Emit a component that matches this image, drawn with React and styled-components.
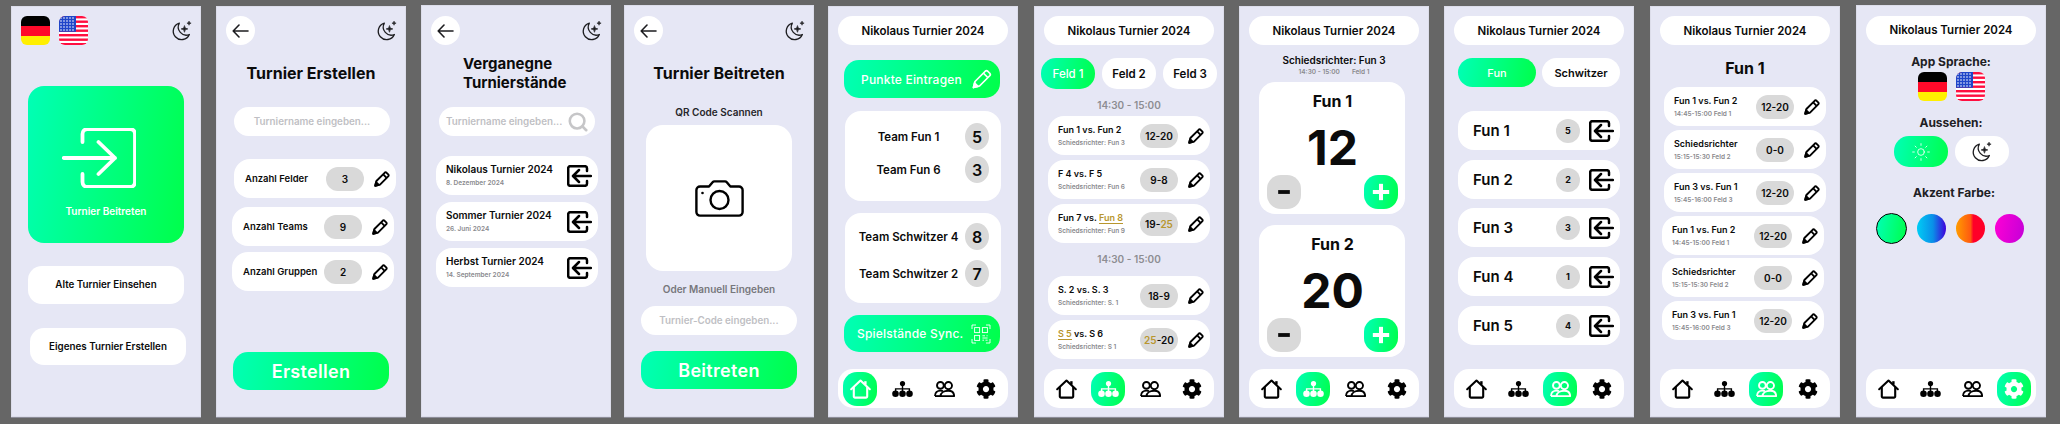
import styled, { createGlobalStyle, css } from 'styled-components'
import { FaCog } from 'react-icons/fa'
import { Minus, Plus, Search, Sun } from 'lucide-react'

const accent = 'linear-gradient(100deg, #00ffb6 0%, #00ff4a 100%)'
const gold = '#b8962e'

const GlobalStyle = createGlobalStyle`
  html, body {
    margin: 0;
    background: #666666;
  }
  * {
    box-sizing: border-box;
  }
  body {
    font-family: Inter, "Liberation Sans", sans-serif;
    color: #0b0b0b;
  }
`

// nudges a part away from where the flow would leave it
const place = css`
  margin-top: ${(p) => p.$top || 0}px;
  margin-left: ${(p) => p.$left || 0}px;
`

const Page = styled.div`
  display: flex;
  width: 2060px;
  height: 424px;
  padding: 6px 0 0 11px;
  overflow: hidden;
`

const Screen = styled.section`
  display: flex;
  flex: none;
  flex-direction: column;
  width: 190px;
  height: ${(p) => (p.$raised ? 412 : 411)}px;
  margin-top: ${(p) => (p.$raised ? -1 : 0)}px;
  margin-left: ${(p) => p.$gap || 0}px;
  padding-top: ${(p) => (p.$raised ? 1 : 0)}px;
  padding-bottom: 9px;
  background: #e6e7f5;
  box-shadow: inset 0 0 0 1px #dcddea, 0 1px 0 #8d8d99;
`

const TopBar = styled.div`
  display: flex;
  flex: none;
  align-items: center;
  justify-content: space-between;
  height: 29px;
  margin-top: 10px;
  padding: 0 9px 0 10px;
`

const Flags = styled.div`
  display: flex;
  justify-content: ${(p) => (p.$center ? 'center' : 'flex-start')};
  gap: 9px;
  ${place}
`

const FlagFrame = styled.div`
  width: 29px;
  height: 29px;
  border-radius: 6px;
  overflow: hidden;
  svg {
    display: block;
  }
`

const BackButton = styled.div`
  display: flex;
  align-items: center;
  justify-content: center;
  width: 29px;
  height: 29px;
  border-radius: 50%;
  background: #ffffff;
`

const BigCard = styled.div`
  display: flex;
  flex: none;
  flex-direction: column;
  align-items: center;
  width: 156px;
  height: 157px;
  padding-top: 42px;
  border-radius: 16px;
  background: ${accent};
  color: #ffffff;
  ${place}
`

const BigIcon = styled.div`
  height: 60px;
  margin-right: 14px;
`

const BigLabel = styled.div`
  margin-top: 17px;
  font-size: 10px;
  font-weight: 600;
  line-height: 12px;
`

const WhiteButton = styled.div`
  display: flex;
  flex: none;
  align-items: center;
  justify-content: center;
  width: 156px;
  height: 37.5px;
  border-radius: 14px;
  background: #ffffff;
  font-size: 9.8px;
  font-weight: 600;
  ${place}
`

const Title = styled.h1`
  flex: none;
  margin: ${(p) => p.$top || 18}px 0 0;
  font-size: 16px;
  font-weight: 700;
  line-height: 20px;
  text-align: center;
`

const TwoLineTitle = styled.h1`
  flex: none;
  margin: 8.5px 0 0 42px;
  font-size: 15px;
  font-weight: 700;
  line-height: 19px;
`

const Field = styled.div`
  display: flex;
  flex: none;
  align-items: center;
  justify-content: ${(p) => (p.$search ? 'space-between' : 'center')};
  width: 156px;
  height: 29px;
  padding: ${(p) => (p.$search ? '0 6px 0 7px' : '0')};
  border-radius: 15px;
  background: #ffffff;
  color: #bfbfc4;
  font-size: 9.8px;
  font-weight: 600;
  ${place}
`

const Row = styled.div`
  display: flex;
  flex: none;
  align-items: center;
  width: 162px;
  height: 39px;
  padding: 0 6px 0 ${(p) => p.$pad || 10}px;
  border-radius: 16px;
  background: #ffffff;
  ${place}
  svg {
    flex: none;
  }
`

const RowLabel = styled.div`
  flex: 1;
  font-size: ${(p) => p.$size || 9.5}px;
  font-weight: 600;
  white-space: nowrap;
`

const RowText = styled.div`
  flex: 1;
  min-width: 0;
  white-space: nowrap;
`

const RowTitle = styled.div`
  font-size: ${(p) => p.$size || 9}px;
  font-weight: 600;
  line-height: 13px;
`

const RowSub = styled.div`
  margin-top: 2px;
  color: #8a8a8e;
  font-size: 6.5px;
  font-weight: 600;
  line-height: 10px;
`

const Scoreline = styled.div`
  display: flex;
  flex: none;
  align-items: center;
  justify-content: center;
  width: 38px;
  height: 24px;
  margin-right: 10px;
  border-radius: 12px;
  background: #d9d9d9;
  font-size: 10px;
  font-weight: 600;
`

const Winner = styled.span`
  color: ${gold};
`

const WinnerName = styled.span`
  border-bottom: 1px solid ${gold};
  color: ${gold};
`

const ActionButton = styled.div`
  display: flex;
  flex: none;
  align-items: center;
  justify-content: space-between;
  width: 156px;
  height: ${(p) => p.$height || 38}px;
  padding: ${(p) => p.$padding};
  border-radius: 15px;
  background: ${accent};
  color: #ffffff;
  font-size: 12px;
  font-weight: 500;
  letter-spacing: 0.2px;
  svg {
    flex: none;
  }
  ${place}
`

const SubmitButton = styled.div`
  display: flex;
  flex: none;
  align-items: center;
  justify-content: center;
  width: 156px;
  height: 38px;
  border-radius: 15px;
  background: ${accent};
  color: #ffffff;
  font-size: 18px;
  font-weight: 600;
  letter-spacing: 0.3px;
  ${place}
`

const CaptionText = styled.div`
  flex: none;
  color: ${(p) => p.$color || '#26262a'};
  font-size: 10px;
  font-weight: 600;
  line-height: 12px;
  text-align: center;
  ${place}
`

const CameraCard = styled.div`
  display: flex;
  flex: none;
  align-items: center;
  justify-content: center;
  width: 146px;
  height: 146px;
  border-radius: 17px;
  background: #ffffff;
  ${place}
`

const Header = styled.div`
  display: flex;
  flex: none;
  align-items: center;
  justify-content: center;
  width: 170px;
  height: 29px;
  margin: ${(p) => (p.$top === undefined ? 10 : p.$top)}px 0 0 10px;
  border-radius: 15px;
  background: #ffffff;
  font-size: 11.5px;
  font-weight: 600;
`

const TeamCard = styled.div`
  display: flex;
  flex: none;
  flex-direction: column;
  gap: ${(p) => p.$gap}px;
  width: 156px;
  height: 90px;
  padding: ${(p) => p.$pad}px 12px 0 13px;
  border-radius: 16px;
  background: #ffffff;
  ${place}
`

const TeamRow = styled.div`
  display: flex;
  align-items: center;
`

const TeamName = styled.div`
  flex: 1;
  padding-right: 6px;
  font-size: 11.5px;
  font-weight: 600;
  text-align: center;
  white-space: nowrap;
`

const TeamPoints = styled.div`
  display: flex;
  flex: none;
  align-items: center;
  justify-content: center;
  width: 24px;
  height: 27px;
  border-radius: 50%;
  background: #d9d9d9;
  font-size: 16px;
  font-weight: 600;
`

const Nav = styled.nav`
  display: grid;
  flex: none;
  grid-template-columns: repeat(4, 42px);
  align-items: center;
  justify-items: center;
  width: 170px;
  height: 39px;
  margin: auto 0 0 10px;
  padding-left: 1px;
  border-radius: 15px;
  background: #ffffff;
`

const NavItem = styled.div`
  display: flex;
  align-items: center;
  justify-content: center;
  width: 34px;
  height: 34px;
  border-radius: 14px;
  background: ${(p) => (p.$active ? accent : 'transparent')};
  color: ${(p) => (p.$active ? '#ffffff' : '#000000')};
`

const Tabs = styled.div`
  display: flex;
  flex: none;
  gap: ${(p) => p.$gap}px;
  margin: 13px 0 0 ${(p) => p.$left}px;
`

const Tab = styled.div`
  display: flex;
  align-items: center;
  justify-content: center;
  width: ${(p) => p.$width}px;
  height: ${(p) => p.$height}px;
  border-radius: 15px;
  background: ${(p) => (p.$active ? accent : '#ffffff')};
  color: ${(p) => (p.$active ? '#ffffff' : '#0b0b0b')};
  font-size: ${(p) => p.$size}px;
  font-weight: ${(p) => (p.$active ? 500 : 600)};
`

const TimeSlot = styled.div`
  flex: none;
  margin-top: 9.5px;
  color: #8d8d92;
  font-size: 10px;
  font-weight: 600;
  line-height: 13px;
  text-align: center;
`

const RefereeMeta = styled.div`
  display: flex;
  flex: none;
  justify-content: center;
  gap: 12px;
  margin-top: 1.5px;
  color: #8a8a8e;
  font-size: 6.5px;
  font-weight: 600;
  line-height: 10px;
`

const ScoreCard = styled.div`
  display: flex;
  flex: none;
  flex-direction: column;
  align-items: center;
  width: 146px;
  height: 132px;
  padding: 9px 7px 0 8px;
  border-radius: 16px;
  background: #ffffff;
  ${place}
`

const ScoreTeam = styled.div`
  font-size: 16px;
  font-weight: 700;
  line-height: 20px;
`

const ScoreValue = styled.div`
  margin-top: 13px;
  font-size: 48px;
  font-weight: 700;
  line-height: 48px;
`

const ScoreControls = styled.div`
  display: flex;
  justify-content: space-between;
  width: 100%;
  margin-top: 3px;
`

const ScoreButton = styled.div`
  display: flex;
  align-items: center;
  justify-content: center;
  width: 34px;
  height: 34px;
  border-radius: 14px;
  background: ${(p) => (p.$plus ? accent : '#d9d9d9')};
  color: ${(p) => (p.$plus ? '#ffffff' : '#0b0b0b')};
`

const RankBadge = styled.div`
  display: flex;
  flex: none;
  align-items: center;
  justify-content: center;
  width: 24px;
  height: 24px;
  margin-right: 9px;
  border-radius: 50%;
  background: #d9d9d9;
  font-size: 9px;
  font-weight: 700;
`

const SectionTitle = styled.div`
  flex: none;
  padding-left: ${(p) => p.$shift || 0}px;
  color: #202024;
  font-size: 12px;
  font-weight: 700;
  line-height: 14px;
  text-align: center;
  ${place}
`

const ThemeToggles = styled.div`
  display: flex;
  flex: none;
  justify-content: center;
  gap: 7px;
  margin-top: 6px;
`

const ThemeToggle = styled.div`
  display: flex;
  align-items: center;
  justify-content: center;
  width: 54px;
  height: 31px;
  border-radius: 15px;
  background: ${(p) => (p.$active ? accent : '#ffffff')};
  color: ${(p) => (p.$active ? '#ffffff' : '#000000')};
`

const Swatches = styled.div`
  display: flex;
  flex: none;
  align-items: center;
  gap: 10px;
  margin: 13px 0 0 20px;
`

const Swatch = styled.div`
  width: ${(p) => (p.$selected ? 31 : 29)}px;
  height: ${(p) => (p.$selected ? 31 : 29)}px;
  border: ${(p) => (p.$selected ? '1.5px solid #000000' : 'none')};
  border-radius: 50%;
  background: ${(p) => p.$fill};
`

const star = (x, y, r) =>
  `M${x} ${y - r}Q${x} ${y} ${x + r} ${y}Q${x} ${y} ${x} ${y + r}Q${x} ${y} ${x - r} ${y}Q${x} ${y} ${x} ${y - r}Z`

function MoonIcon({ size = 21 }) {
  return (
    <svg width={size} height={size} viewBox="0 0 24 24" fill="none">
      <path
        d="M9.5 3.6A9.6 9.6 0 1 0 21 16.6A9.2 9.2 0 0 1 9.5 3.6Z"
        stroke="#1c1c1f"
        strokeWidth="1.5"
        strokeLinejoin="round"
      />
      <path d={star(15.4, 10.2, 3.8)} fill="#1c1c1f" stroke="#1c1c1f" strokeWidth="0.8" />
      <path d={star(20.6, 3.6, 2.4)} fill="#1c1c1f" stroke="#1c1c1f" strokeWidth="0.6" />
    </svg>
  )
}

function BackIcon() {
  return (
    <svg width="17" height="14" viewBox="0 0 17 14" fill="none" stroke="#1c1c1f" strokeWidth="1.6" strokeLinecap="round" strokeLinejoin="round">
      <path d="M16 7H1.2M7 1L1.2 7L7 13" />
    </svg>
  )
}

function GermanFlag() {
  return (
    <FlagFrame>
      <svg width="29" height="29" viewBox="0 0 29 29">
        <rect width="29" height="10" fill="#000000" />
        <rect y="10" width="29" height="10" fill="#ff0a2a" />
        <rect y="20" width="29" height="9" fill="#ffef00" />
      </svg>
    </FlagFrame>
  )
}

function UsaFlag() {
  const stripes = [0, 4.5, 9, 13.5, 18, 22.5, 27]
  const dots = []
  for (let y = 2; y < 15; y += 3) {
    for (let x = 2; x < 17; x += 3) dots.push([x, y])
  }
  return (
    <FlagFrame>
      <svg width="29" height="29" viewBox="0 0 29 29">
        <rect width="29" height="29" fill="#ffffff" />
        {stripes.map((y) => (
          <rect key={y} y={y} width="29" height="2.4" fill="#ff0f40" />
        ))}
        <rect width="17" height="15.8" fill="#1f45c9" />
        {dots.map(([x, y]) => (
          <circle key={`${x}-${y}`} cx={x} cy={y} r="0.8" fill="#ffffff" />
        ))}
      </svg>
    </FlagFrame>
  )
}

function JoinIcon() {
  return (
    <svg width="74" height="60" viewBox="0 0 74 60" fill="none" stroke="#ffffff" strokeWidth="3.8" strokeLinecap="round" strokeLinejoin="round">
      <path d="M20.5 14V6a5 5 0 0 1 5-5H68a5 5 0 0 1 5 5v48a5 5 0 0 1-5 5H25.5a5 5 0 0 1-5-5v-8" />
      <path d="M1.8 30H53M36.5 14L53 30L36.5 46" />
    </svg>
  )
}

function ExitIcon() {
  return (
    <svg width="25" height="22" viewBox="0 0 25 22" fill="none" stroke="#000000" strokeWidth="2.5" strokeLinecap="round" strokeLinejoin="round">
      <path d="M20 6V3.2a2 2 0 0 0-2-2H3.2a2 2 0 0 0-2 2v15.6a2 2 0 0 0 2 2H18a2 2 0 0 0 2-2V16" />
      <path d="M24 11H6.5M12 5l-6 6 6 6" />
    </svg>
  )
}

function PencilIcon({ size = 16, color = '#000000', outline = 1.9 }) {
  return (
    <svg width={size} height={size} viewBox="0 0 16 16" fill="none" stroke={color} strokeWidth={outline} strokeLinejoin="round">
      <path d="M1.2 14.8L2.4 10L10.6 1.8Q11.6 .9 12.6 1.8L14.2 3.4Q15.1 4.4 14.2 5.4L6 13.6Z" />
      <path d="M9.2 3.4L12.6 6.8" />
      <path d="M1.2 14.8L2.1 11.2L4.8 13.9Z" fill={color} />
    </svg>
  )
}

function CameraIcon() {
  return (
    <svg width="49" height="37" viewBox="0 0 49 37" fill="none" stroke="#000000" strokeWidth="2.4" strokeLinejoin="round">
      <path d="M14 6.5L17.6 2.2A2.4 2.4 0 0 1 19.4 1.4H30A2.4 2.4 0 0 1 31.8 2.2L35.4 6.5H44A3.6 3.6 0 0 1 47.6 10.1V32A3.6 3.6 0 0 1 44 35.6H5A3.6 3.6 0 0 1 1.4 32V10.1A3.6 3.6 0 0 1 5 6.5Z" />
      <circle cx="24.5" cy="20" r="9" />
      <circle cx="7.5" cy="13" r="1.3" fill="#000000" stroke="none" />
    </svg>
  )
}

function QrIcon() {
  return (
    <svg width="20" height="20" viewBox="0 0 20 20" fill="none" stroke="#ffffff" strokeWidth="0.9">
      <path d="M1 5V1H5M15 1H19V5M19 15V19H15M5 19H1V15" />
      <rect x="3.6" y="3.6" width="5" height="5" />
      <rect x="11.4" y="3.6" width="5" height="5" />
      <rect x="3.6" y="11.4" width="5" height="5" />
      <path d="M11.4 11.8H14M15.5 11.8H16.6M11.4 14H16.6M11.4 16.2H13M14.5 16.2H16.6" />
    </svg>
  )
}

function HomeIcon() {
  return (
    <svg width="21" height="20" viewBox="0 0 21 20" fill="none" stroke="currentColor" strokeWidth="2.1" strokeLinecap="round" strokeLinejoin="round">
      <path d="M1.2 10.2L10.5 1.5L19.8 10.2" />
      <path d="M3.8 8.5V17.4a1.2 1.2 0 0 0 1.2 1.2H16a1.2 1.2 0 0 0 1.2-1.2V8.5" />
      <path d="M15.4 2.2V5.6" strokeWidth="2.4" strokeLinecap="butt" />
    </svg>
  )
}

function TreeIcon() {
  return (
    <svg width="21" height="16" viewBox="0 0 21 16" fill="currentColor">
      <circle cx="10.5" cy="2.6" r="2.6" />
      <path d="M9.8 4h1.4v3.2h6.9v2.8h-1.4V8.6h-5.5V10H9.8V8.6H4.3V10H2.9V7.2h6.9z" />
      <circle cx="3.5" cy="12.7" r="3.3" />
      <circle cx="10.5" cy="12.7" r="3.3" />
      <circle cx="17.5" cy="12.7" r="3.3" />
    </svg>
  )
}

function PeopleIcon() {
  return (
    <svg width="21" height="16" viewBox="0 0 21 16" fill="none" stroke="currentColor" strokeWidth="1.9" strokeLinejoin="round">
      <circle cx="6.4" cy="4.4" r="3.4" />
      <circle cx="14.4" cy="4.6" r="3.6" />
      <path d="M1 15.1C1 11.6 3.4 9.6 6.4 9.6C7.4 9.6 8.2 9.8 9 10.2" />
      <path d="M6.6 15.1C6.6 11.8 10 9.8 14.2 9.8C17.8 9.8 20.1 11.8 20.1 15.1Z" />
      <path d="M1 15.1H7" />
    </svg>
  )
}

const NAV_ICONS = [
  <HomeIcon key="home" />,
  <TreeIcon key="tree" />,
  <PeopleIcon key="people" />,
  <FaCog key="gear" size={20} />,
]

function BottomNav({ active }) {
  return (
    <Nav>
      {NAV_ICONS.map((icon, i) => (
        <NavItem key={i} $active={i === active}>
          {icon}
        </NavItem>
      ))}
    </Nav>
  )
}

const TOURNAMENT = 'Nikolaus Turnier 2024'

const settingsRows = [
  { label: 'Anzahl Felder', value: 3, left: 18, top: 23, pad: 11 },
  { label: 'Anzahl Teams', value: 9, left: 16, top: 9, pad: 11 },
  { label: 'Anzahl Gruppen', value: 2, left: 16, top: 6, pad: 11 },
]

const pastTournaments = [
  { name: 'Nikolaus Turnier 2024', date: '8. Dezember 2024', top: 20 },
  { name: 'Sommer Turnier 2024', date: '26. Juni 2024', top: 7 },
  { name: 'Herbst Turnier 2024', date: '14. September 2024', top: 7 },
]

const firstSlot = [
  { title: 'Fun 1 vs. Fun 2', sub: 'Schiedsrichter: Fun 3', score: '12-20', top: 4.5 },
  { title: 'F 4 vs. F 5', sub: 'Schiedsrichter: Fun 6', score: '9-8', top: 5 },
  {
    title: (
      <>
        Fun 7 vs. <WinnerName>Fun 8</WinnerName>
      </>
    ),
    sub: 'Schiedsrichter: Fun 9',
    score: (
      <>
        19-<Winner>25</Winner>
      </>
    ),
    top: 5,
  },
]

const secondSlot = [
  { title: 'S. 2 vs. S. 3', sub: 'Schiedsrichter: S. 1', score: '18-9', top: 10.5 },
  {
    title: (
      <>
        <WinnerName>S 5</WinnerName> vs. S 6
      </>
    ),
    sub: 'Schiedsrichter: S 1',
    score: (
      <>
        <Winner>25</Winner>-20
      </>
    ),
    top: 5,
  },
]

const standings = [
  { name: 'Fun 1', rank: 5, top: 24 },
  { name: 'Fun 2', rank: 2, top: 10 },
  { name: 'Fun 3', rank: 3, top: 9 },
  { name: 'Fun 4', rank: 1, top: 10 },
  { name: 'Fun 5', rank: 4, top: 10 },
]

const teamGames = [
  { title: 'Fun 1 vs. Fun 2', sub: '14:45-15:00 Feld 1', score: '12-20', top: 9, left: 14 },
  { title: 'Schiedsrichter', sub: '15:15-15:30 Feld 2', score: '0-0', top: 4, left: 14 },
  { title: 'Fun 3 vs. Fun 1', sub: '15:45-16:00 Feld 3', score: '12-20', top: 4, left: 14 },
  { title: 'Fun 1 vs. Fun 2', sub: '14:45-15:00 Feld 1', score: '12-20', top: 4, left: 12 },
  { title: 'Schiedsrichter', sub: '15:15-15:30 Feld 2', score: '0-0', top: 3, left: 12 },
  { title: 'Fun 3 vs. Fun 1', sub: '15:45-16:00 Feld 3', score: '12-20', top: 4, left: 12 },
]

const accentColours = [
  { fill: 'linear-gradient(100deg, #00ffb6, #00ff4a)', selected: true },
  { fill: 'linear-gradient(90deg, #00cdf5 0%, #0a8fe8 55%, #3f00dc 100%)' },
  { fill: 'linear-gradient(90deg, #ff9d00 0%, #ff5a10 50%, #ff0028 60%, #ff0028 100%)' },
  { fill: 'linear-gradient(100deg, #ff00d4, #c400d8)' },
]

function GameRow({ game }) {
  return (
    <Row $top={game.top} $left={game.left === undefined ? 14 : game.left}>
      <RowText>
        <RowTitle>{game.title}</RowTitle>
        <RowSub>{game.sub}</RowSub>
      </RowText>
      <Scoreline>{game.score}</Scoreline>
      <PencilIcon />
    </Row>
  )
}

function ScorePanel({ team, score, top }) {
  return (
    <ScoreCard $top={top} $left={20}>
      <ScoreTeam>{team}</ScoreTeam>
      <ScoreValue>{score}</ScoreValue>
      <ScoreControls>
        <ScoreButton>
          <Minus size={20} strokeWidth={4.6} strokeLinecap="butt" />
        </ScoreButton>
        <ScoreButton $plus>
          <Plus size={28} strokeWidth={3.4} strokeLinecap="butt" />
        </ScoreButton>
      </ScoreControls>
    </ScoreCard>
  )
}

function App() {
  return (
    <Page>
      <GlobalStyle />

      <Screen>
        <TopBar>
          <Flags>
            <GermanFlag />
            <UsaFlag />
          </Flags>
          <MoonIcon />
        </TopBar>
        <BigCard $top={41} $left={17}>
          <BigIcon>
            <JoinIcon />
          </BigIcon>
          <BigLabel>Turnier Beitreten</BigLabel>
        </BigCard>
        <WhiteButton $top={23} $left={17}>Alte Turnier Einsehen</WhiteButton>
        <WhiteButton $top={24} $left={19}>Eigenes Turnier Erstellen</WhiteButton>
      </Screen>

      <Screen $gap={15}>
        <TopBar>
          <BackButton>
            <BackIcon />
          </BackButton>
          <MoonIcon />
        </TopBar>
        <Title>Turnier Erstellen</Title>
        <Field $top={24} $left={18}>Turniername eingeben...</Field>
        {settingsRows.map((row) => (
          <Row key={row.label} $top={row.top} $left={row.left} $pad={row.pad}>
            <RowLabel>{row.label}</RowLabel>
            <Scoreline>{row.value}</Scoreline>
            <PencilIcon />
          </Row>
        ))}
        <SubmitButton $top={61} $left={17}>Erstellen</SubmitButton>
      </Screen>

      <Screen $gap={15} $raised>
        <TopBar>
          <BackButton>
            <BackIcon />
          </BackButton>
          <MoonIcon />
        </TopBar>
        <TwoLineTitle>
          Verganegne
          <br />
          Turnierstände
        </TwoLineTitle>
        <Field $top={15.5} $left={18} $search>
          Turniername eingeben...
          <Search size={22} color="#c6c6c8" strokeWidth={2.8} />
        </Field>
        {pastTournaments.map((item) => (
          <Row key={item.name} $top={item.top} $left={15}>
            <RowText>
              <RowTitle $size={10}>{item.name}</RowTitle>
              <RowSub>{item.date}</RowSub>
            </RowText>
            <ExitIcon />
          </Row>
        ))}
      </Screen>

      <Screen $gap={13} $raised>
        <TopBar>
          <BackButton>
            <BackIcon />
          </BackButton>
          <MoonIcon />
        </TopBar>
        <Title>Turnier Beitreten</Title>
        <CaptionText $top={23}>QR Code Scannen</CaptionText>
        <CameraCard $top={7} $left={22}>
          <CameraIcon />
        </CameraCard>
        <CaptionText $top={12} $color="#77777c">Oder Manuell Eingeben</CaptionText>
        <Field $top={11} $left={17}>Turnier-Code eingeben...</Field>
        <SubmitButton $top={16} $left={17}>Beitreten</SubmitButton>
      </Screen>

      <Screen $gap={14}>
        <Header>{TOURNAMENT}</Header>
        <ActionButton $top={15} $left={16} $padding="0 8px 0 17px">
          Punkte Eintragen
          <PencilIcon size={20} color="#ffffff" outline={1.4} />
        </ActionButton>
        <TeamCard $top={13} $left={17} $pad={12} $gap={6}>
          <TeamRow>
            <TeamName>Team Fun 1</TeamName>
            <TeamPoints>5</TeamPoints>
          </TeamRow>
          <TeamRow>
            <TeamName>Team Fun 6</TeamName>
            <TeamPoints>3</TeamPoints>
          </TeamRow>
        </TeamCard>
        <TeamCard $top={12} $left={17} $pad={10} $gap={10}>
          <TeamRow>
            <TeamName>Team Schwitzer 4</TeamName>
            <TeamPoints>8</TeamPoints>
          </TeamRow>
          <TeamRow>
            <TeamName>Team Schwitzer 2</TeamName>
            <TeamPoints>7</TeamPoints>
          </TeamRow>
        </TeamCard>
        <ActionButton $top={12} $left={16} $height={37} $padding="0 9px 0 13px">
          Spielstände Sync.
          <QrIcon />
        </ActionButton>
        <BottomNav active={0} />
      </Screen>

      <Screen $gap={16}>
        <Header>{TOURNAMENT}</Header>
        <Tabs $gap={7} $left={7}>
          <Tab $active $width={54} $height={31} $size={11.5}>Feld 1</Tab>
          <Tab $width={54} $height={31} $size={11.5}>Feld 2</Tab>
          <Tab $width={54} $height={31} $size={11.5}>Feld 3</Tab>
        </Tabs>
        <TimeSlot>14:30 - 15:00</TimeSlot>
        {firstSlot.map((game, i) => (
          <GameRow key={i} game={game} />
        ))}
        <TimeSlot>14:30 - 15:00</TimeSlot>
        {secondSlot.map((game, i) => (
          <GameRow key={i} game={game} />
        ))}
        <BottomNav active={1} />
      </Screen>

      <Screen $gap={15}>
        <Header>{TOURNAMENT}</Header>
        <CaptionText $top={8.5} $color="#0b0b0b">Schiedsrichter: Fun 3</CaptionText>
        <RefereeMeta>
          <span>14:30 - 15:00</span>
          <span>Feld 1</span>
        </RefereeMeta>
        <ScorePanel team="Fun 1" score="12" top={5} />
        <ScorePanel team="Fun 2" score="20" top={11} />
        <BottomNav active={1} />
      </Screen>

      <Screen $gap={15}>
        <Header>{TOURNAMENT}</Header>
        <Tabs $gap={6} $left={14}>
          <Tab $active $width={78} $height={29} $size={11}>Fun</Tab>
          <Tab $width={78} $height={29} $size={11}>Schwitzer</Tab>
        </Tabs>
        {standings.map((team) => (
          <Row key={team.name} $top={team.top} $left={14} $pad={15}>
            <RowLabel $size={15}>{team.name}</RowLabel>
            <RankBadge>{team.rank}</RankBadge>
            <ExitIcon />
          </Row>
        ))}
        <BottomNav active={2} />
      </Screen>

      <Screen $gap={16}>
        <Header>{TOURNAMENT}</Header>
        <Title $top={13}>Fun 1</Title>
        {teamGames.map((game, i) => (
          <GameRow key={i} game={game} />
        ))}
        <BottomNav active={2} />
      </Screen>

      <Screen $gap={16} $raised>
        <Header $top={9.5}>{TOURNAMENT}</Header>
        <SectionTitle $top={10.5}>App Sprache:</SectionTitle>
        <Flags $center $top={3}>
          <GermanFlag />
          <UsaFlag />
        </Flags>
        <SectionTitle $top={15}>Aussehen:</SectionTitle>
        <ThemeToggles>
          <ThemeToggle $active>
            <Sun size={20} strokeWidth={1} />
          </ThemeToggle>
          <ThemeToggle>
            <MoonIcon />
          </ThemeToggle>
        </ThemeToggles>
        <SectionTitle $top={19} $shift={6}>Akzent Farbe:</SectionTitle>
        <Swatches>
          {accentColours.map((colour) => (
            <Swatch key={colour.fill} $fill={colour.fill} $selected={colour.selected} />
          ))}
        </Swatches>
        <BottomNav active={3} />
      </Screen>
    </Page>
  )
}

export default App
